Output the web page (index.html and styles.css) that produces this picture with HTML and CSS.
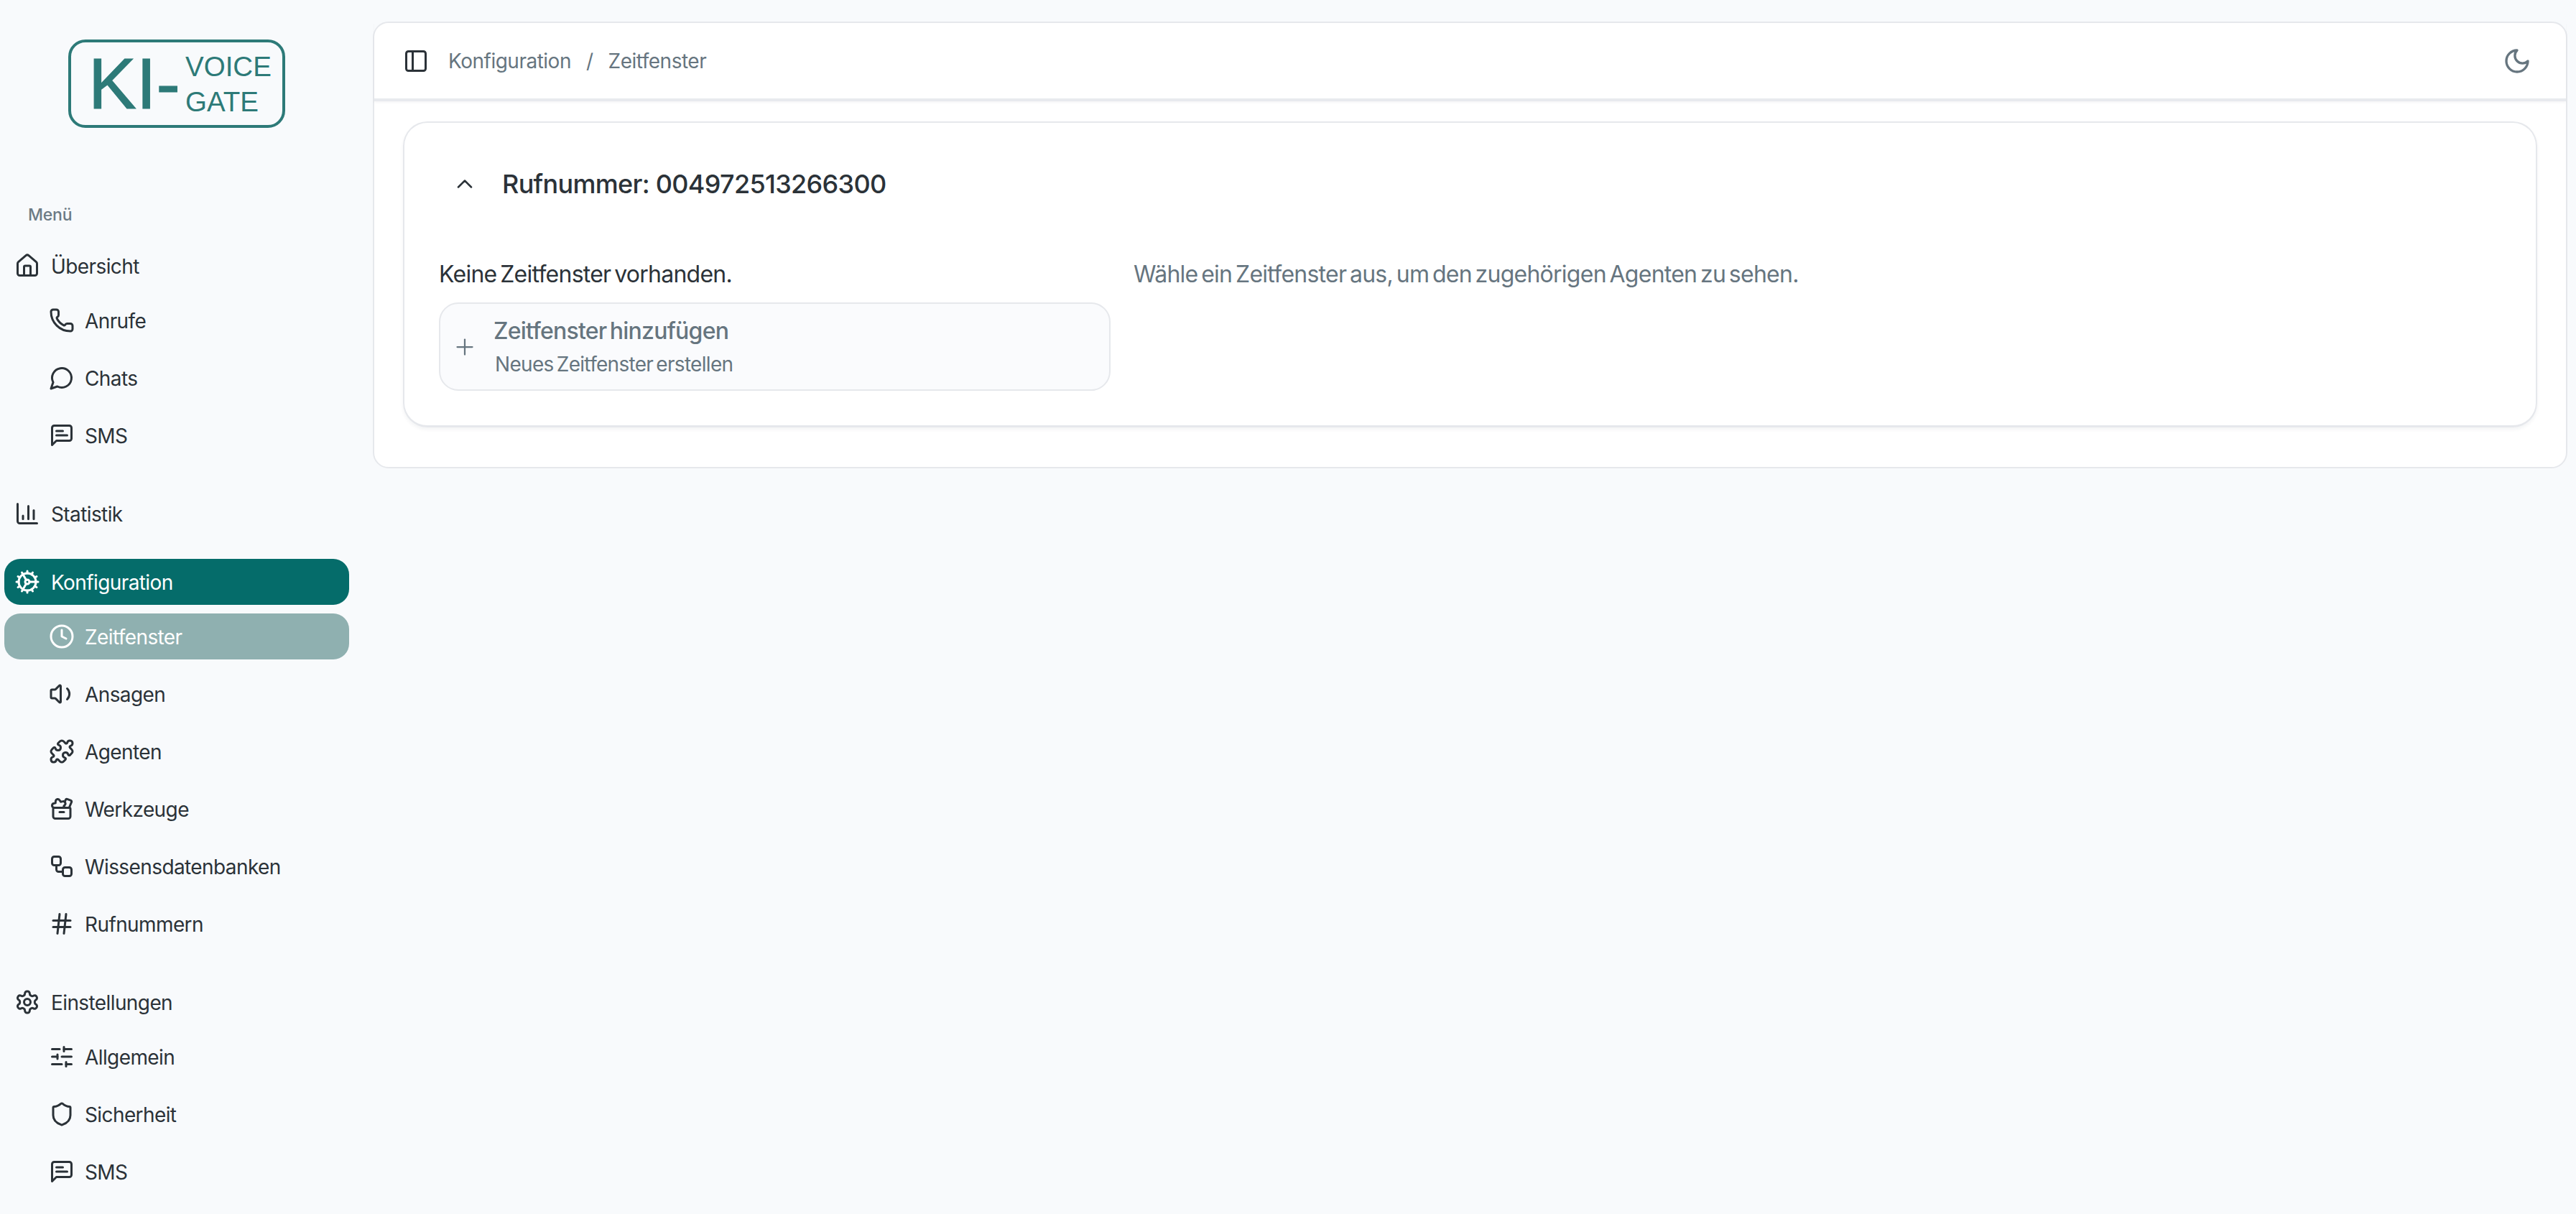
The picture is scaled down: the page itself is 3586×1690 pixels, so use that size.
FILE: index.html
```html
<!DOCTYPE html>
<html lang="de">
<head>
<meta charset="utf-8">
<title>Zeitfenster</title>
<link rel="stylesheet" href="styles.css">
</head>
<body>
<svg class="defs" aria-hidden="true">
  <symbol id="i-house" viewBox="0 0 24 24"><path d="M15 21v-8a1 1 0 0 0-1-1h-4a1 1 0 0 0-1 1v8"/><path d="M3 10a2 2 0 0 1 .709-1.528l7-5.999a2 2 0 0 1 2.582 0l7 5.999A2 2 0 0 1 21 10v9a2 2 0 0 1-2 2H5a2 2 0 0 1-2-2z"/></symbol>
  <symbol id="i-phone" viewBox="0 0 24 24"><path d="M13.832 16.568a1 1 0 0 0 1.213-.303l.355-.465A2 2 0 0 1 17 15h3a2 2 0 0 1 2 2v3a2 2 0 0 1-2 2A18 18 0 0 1 2 4a2 2 0 0 1 2-2h3a2 2 0 0 1 2 2v3a2 2 0 0 1-.8 1.6l-.468.351a1 1 0 0 0-.292 1.233 14 14 0 0 0 6.392 6.384"/></symbol>
  <symbol id="i-chat" viewBox="0 0 24 24"><path d="M7.9 20A9 9 0 1 0 4 16.1L2 22Z"/></symbol>
  <symbol id="i-sms" viewBox="0 0 24 24"><path d="M21 15a2 2 0 0 1-2 2H7l-4 4V5a2 2 0 0 1 2-2h14a2 2 0 0 1 2 2z"/><path d="M13 8H7"/><path d="M17 12H7"/></symbol>
  <symbol id="i-chart" viewBox="0 0 24 24"><path d="M3 3v16a2 2 0 0 0 2 2h16"/><path d="M18 17V9"/><path d="M13 17V5"/><path d="M8 17v-3"/></symbol>
  <symbol id="i-cog" viewBox="0 0 24 24"><path d="M11 10.27 7 3.34"/><path d="m11 13.73-4 6.93"/><path d="M12 22v-2"/><path d="M12 2v2"/><path d="M14 12h8"/><path d="m17 20.66-1-1.73"/><path d="m17 3.34-1 1.73"/><path d="M2 12h2"/><path d="m20.66 17-1.73-1"/><path d="m20.66 7-1.73 1"/><path d="m3.34 17 1.73-1"/><path d="m3.34 7 1.73 1"/><circle cx="12" cy="12" r="2"/><circle cx="12" cy="12" r="8"/></symbol>
  <symbol id="i-clock" viewBox="0 0 24 24"><circle cx="12" cy="12" r="10"/><path d="M12 6v6l4 2"/></symbol>
  <symbol id="i-volume" viewBox="0 0 24 24"><path d="M11 4.702a.705.705 0 0 0-1.203-.498L6.413 7.587A1.4 1.4 0 0 1 5.416 8H3a1 1 0 0 0-1 1v6a1 1 0 0 0 1 1h2.416a1.4 1.4 0 0 1 .997.413l3.383 3.384A.705.705 0 0 0 11 19.298z"/><path d="M17 7a7 7 0 0 1 0 10"/></symbol>
  <symbol id="i-puzzle" viewBox="0 0 24 24"><path d="M15.39 4.39a1 1 0 0 0 1.68-.474 2.5 2.5 0 1 1 3.014 3.015 1 1 0 0 0-.474 1.68l1.683 1.682a2.414 2.414 0 0 1 0 3.414L19.61 15.39a1 1 0 0 1-1.68-.474 2.5 2.5 0 1 0-3.014 3.015 1 1 0 0 1 .474 1.68l-1.683 1.682a2.414 2.414 0 0 1-3.414 0L8.61 19.61a1 1 0 0 0-1.68.474 2.5 2.5 0 1 1-3.014-3.015 1 1 0 0 0 .474-1.68l-1.683-1.682a2.414 2.414 0 0 1 0-3.414L4.39 8.61a1 1 0 0 1 1.68.474 2.5 2.5 0 1 0 3.014-3.015 1 1 0 0 1-.474-1.68l1.683-1.682a2.414 2.414 0 0 1 3.414 0z"/></symbol>
  <symbol id="i-tool" viewBox="0 0 24 24"><path d="M10 15h4"/><path d="m14.817 10.995-.971-1.45 1.034-1.232a2 2 0 0 0-2.025-3.238l-1.82.364L9.91 3.885a2 2 0 0 0-3.625.748L6.141 6.55l-1.725.426a2 2 0 0 0-.19 3.756l.657.27"/><path d="m18.822 10.995 2.26-5.38a1 1 0 0 0-.557-1.318L16.954 2.9a1 1 0 0 0-1.281.533l-.924 2.122"/><path d="M4 12.006A1 1 0 0 1 4.994 11H19a1 1 0 0 1 1 1v7a2 2 0 0 1-2 2H6a2 2 0 0 1-2-2z"/></symbol>
  <symbol id="i-flow" viewBox="0 0 24 24"><rect x="3" y="3" width="8" height="8" rx="2"/><path d="M7 11v4a2 2 0 0 0 2 2h4"/><rect x="13" y="13" width="8" height="8" rx="2"/></symbol>
  <symbol id="i-hash" viewBox="0 0 24 24"><path d="M4 9h16"/><path d="M4 15h16"/><path d="M10 3 8 21"/><path d="M16 3l-2 18"/></symbol>
  <symbol id="i-gear" viewBox="0 0 24 24"><path d="M12.22 2h-.44a2 2 0 0 0-2 2v.18a2 2 0 0 1-1 1.73l-.43.25a2 2 0 0 1-2 0l-.15-.08a2 2 0 0 0-2.73.73l-.22.38a2 2 0 0 0 .73 2.73l.15.1a2 2 0 0 1 1 1.72v.51a2 2 0 0 1-1 1.74l-.15.09a2 2 0 0 0-.73 2.73l.22.38a2 2 0 0 0 2.73.73l.15-.08a2 2 0 0 1 2 0l.43.25a2 2 0 0 1 1 1.73V20a2 2 0 0 0 2 2h.44a2 2 0 0 0 2-2v-.18a2 2 0 0 1 1-1.73l.43-.25a2 2 0 0 1 2 0l.15.08a2 2 0 0 0 2.73-.73l.22-.39a2 2 0 0 0-.73-2.73l-.15-.08a2 2 0 0 1-1-1.74v-.5a2 2 0 0 1 1-1.74l.15-.09a2 2 0 0 0 .73-2.73l-.22-.38a2 2 0 0 0-2.73-.73l-.15.08a2 2 0 0 1-2 0l-.43-.25a2 2 0 0 1-1-1.73V4a2 2 0 0 0-2-2z"/><circle cx="12" cy="12" r="3"/></symbol>
  <symbol id="i-sliders" viewBox="0 0 24 24"><path d="M10 5H3"/><path d="M12 19H3"/><path d="M14 3v4"/><path d="M16 17v4"/><path d="M21 12h-9"/><path d="M21 19h-5"/><path d="M21 5h-7"/><path d="M8 10v4"/><path d="M8 12H3"/></symbol>
  <symbol id="i-shield" viewBox="0 0 24 24"><path d="M20 13c0 5-3.5 7.5-7.66 8.95a1 1 0 0 1-.67-.01C7.5 20.5 4 18 4 13V6a1 1 0 0 1 1-1c2 0 4.5-1.2 6.24-2.72a1.17 1.17 0 0 1 1.52 0C14.51 3.81 17 5 19 5a1 1 0 0 1 1 1z"/></symbol>
  <symbol id="i-panel" viewBox="0 0 24 24"><rect x="3" y="3" width="18" height="18" rx="2"/><path d="M9 3v18"/></symbol>
  <symbol id="i-moon" viewBox="0 0 24 24"><path d="M12 3a6 6 0 0 0 9 9 9 9 0 1 1-9-9Z"/></symbol>
  <symbol id="i-up" viewBox="0 0 24 24"><path d="m18 15-6-6-6 6"/></symbol>
  <symbol id="i-plus" viewBox="0 0 24 24"><path d="M5 12h14"/><path d="M12 5v14"/></symbol>
</svg>

<div class="app">
  <aside class="sidebar">
    <div class="logo-wrap">
      <svg class="logo" viewBox="0 0 302 123">
        <rect class="logo-frame" x="2" y="2" width="298" height="119" rx="22"/>
        <text class="logo-big" x="28" y="96">KI-</text>
        <text class="logo-small" x="163" y="51">VOICE</text>
        <text class="logo-small" x="163" y="100">GATE</text>
      </svg>
    </div>
    <div class="menu-label">Menü</div>
    <nav class="nav">
      <section class="group">
        <a class="item"><svg class="ico"><use href="#i-house"/></svg><span>Übersicht</span></a>
        <div class="sub">
          <a class="item child"><svg class="ico"><use href="#i-phone"/></svg><span>Anrufe</span></a>
          <a class="item child"><svg class="ico"><use href="#i-chat"/></svg><span>Chats</span></a>
          <a class="item child"><svg class="ico"><use href="#i-sms"/></svg><span>SMS</span></a>
        </div>
      </section>
      <section class="group tight">
        <a class="item"><svg class="ico"><use href="#i-chart"/></svg><span>Statistik</span></a>
      </section>
      <section class="group">
        <a class="item active"><svg class="ico"><use href="#i-cog"/></svg><span>Konfiguration</span></a>
        <div class="sub">
          <a class="item child current"><svg class="ico"><use href="#i-clock"/></svg><span>Zeitfenster</span></a>
          <a class="item child"><svg class="ico"><use href="#i-volume"/></svg><span>Ansagen</span></a>
          <a class="item child"><svg class="ico"><use href="#i-puzzle"/></svg><span>Agenten</span></a>
          <a class="item child"><svg class="ico"><use href="#i-tool"/></svg><span>Werkzeuge</span></a>
          <a class="item child"><svg class="ico"><use href="#i-flow"/></svg><span>Wissensdatenbanken</span></a>
          <a class="item child"><svg class="ico"><use href="#i-hash"/></svg><span>Rufnummern</span></a>
        </div>
      </section>
      <section class="group">
        <a class="item"><svg class="ico"><use href="#i-gear"/></svg><span>Einstellungen</span></a>
        <div class="sub">
          <a class="item child"><svg class="ico"><use href="#i-sliders"/></svg><span>Allgemein</span></a>
          <a class="item child"><svg class="ico"><use href="#i-shield"/></svg><span>Sicherheit</span></a>
          <a class="item child"><svg class="ico"><use href="#i-sms"/></svg><span>SMS</span></a>
        </div>
      </section>
    </nav>
  </aside>

  <main class="main">
    <header class="topbar">
      <svg class="ico panel"><use href="#i-panel"/></svg>
      <div class="crumbs"><span>Konfiguration</span><span class="sep">/</span><span>Zeitfenster</span></div>
      <svg class="ico moon"><use href="#i-moon"/></svg>
    </header>
    <div class="content">
      <div class="card">
        <div class="card-head">
          <svg class="ico chev"><use href="#i-up"/></svg>
          <h2>Rufnummer: 004972513266300</h2>
        </div>
        <div class="columns">
          <div class="col-left">
            <p class="empty">Keine Zeitfenster vorhanden.</p>
            <button class="add" type="button">
              <svg class="ico plus"><use href="#i-plus"/></svg>
              <span class="add-text">
                <span class="add-title">Zeitfenster hinzufügen</span>
                <span class="add-sub">Neues Zeitfenster erstellen</span>
              </span>
            </button>
          </div>
          <p class="hint">Wähle ein Zeitfenster aus, um den zugehörigen Agenten zu sehen.</p>
        </div>
      </div>
    </div>
  </main>
</div>
</body>
</html>
```
FILE: styles.css
```css
* { box-sizing: border-box; }
html, body { margin: 0; height: 100%; }
body {
  background: #f8fafc;
  color: #2b3238;
  font-family: "Inter", "Liberation Sans", sans-serif;
  overflow: hidden;
}
.defs { position: absolute; width: 0; height: 0; }
.ico {
  width: 36px;
  height: 36px;
  flex: none;
  fill: none;
  stroke: currentColor;
  stroke-width: 2;
  stroke-linecap: round;
  stroke-linejoin: round;
}
.app { display: flex; align-items: flex-start; height: 1690px; }

/* Sidebar */
.sidebar { width: 519px; flex: none; padding: 55px 0 0 6px; }
.logo-wrap { padding-left: 89px; height: 123px; }
.logo { display: block; width: 302px; height: 123px; }
.logo-frame { fill: none; stroke: #2d7a78; stroke-width: 4; }
.logo-big { font: 400 100px "Liberation Sans", sans-serif; fill: #2d7a78; stroke: #2d7a78; stroke-width: 1.2px; }
.logo-small { font: 400 38.5px "Liberation Sans", sans-serif; fill: #2d7a78; }
.menu-label {
  margin-top: 106px;
  padding-left: 33px;
  height: 30px;
  line-height: 30px;
  font-size: 23px;
  font-weight: 500;
  letter-spacing: -0.2px;
  color: #6b7a85;
}
.nav { width: 480px; margin-top: 24px; }
.group { margin-bottom: 45px; }
.group.tight { margin-bottom: 31px; }
.item {
  display: flex;
  align-items: center;
  gap: 15px;
  height: 64px;
  padding-left: 14px;
  border-radius: 22px;
  font-size: 28px;
  line-height: 38px;
  letter-spacing: -0.6px;
  color: #2b3238;
}
.item span { padding-top: 2px; }
.item.active { background: #056c6a; color: #fff; }
.sub { display: flex; flex-direction: column; gap: 16px; margin-top: 12px; }
.item.child { padding-left: 62px; gap: 14px; }
.item.current { background: #8fb0b0; color: #fff; }

/* Main */
.main {
  width: 3055px;
  margin-top: 30px;
  background: #fff;
  border: 2px solid #e6e8ec;
  border-radius: 22px;
}
.topbar {
  display: flex;
  align-items: center;
  height: 109px;
  padding: 0 48px 0 40px;
  border-bottom: 4px solid #e8eaee;
  box-shadow: 0 2px 3px rgba(20, 30, 50, 0.04);
}
.panel { color: #2b3238; }
.crumbs {
  display: flex;
  gap: 21px;
  margin-left: 27px;
  font-size: 28px;
  letter-spacing: -0.5px;
  color: #66757f;
}
.moon { width: 40px; height: 40px; margin-left: auto; color: #66757f; }
.content { padding: 28px 40px 55px 40px; }
.card {
  height: 426px;
  padding: 0 48px;
  border: 2px solid #e6e8ec;
  border-bottom-width: 3px;
  border-radius: 34px;
  box-shadow: 0 3px 5px rgba(20, 30, 50, 0.05);
}
.card-head { display: flex; align-items: center; gap: 34px; height: 86px; margin-top: 42px; padding-left: 18px; }
.card-head h2 { margin: 0; font-size: 36px; font-weight: 500; letter-spacing: -0.7px; color: #2b3238; }
.chev { color: #2b3238; stroke-width: 1.7; }
.columns { display: flex; gap: 32px; margin-top: 58px; }
.col-left { width: 935px; flex: none; }
.empty, .hint { margin: 0; height: 50px; line-height: 50px; font-size: 32px; letter-spacing: -0.75px; word-spacing: -3.5px; }
.empty { color: #2b3238; }
.hint { color: #66757f; }
.add {
  display: flex;
  align-items: center;
  gap: 22px;
  width: 100%;
  height: 123px;
  margin-top: 14px;
  padding: 0 0 0 16px;
  background: #fafbfd;
  border: 2px solid #e6e8ec;
  border-radius: 27px;
  font-family: inherit;
  text-align: left;
}
.plus { color: #66757f; stroke-width: 1.5; }
.add-text { display: flex; flex-direction: column; gap: 6px; }
.add-title { font-size: 32px; line-height: 42px; letter-spacing: -0.75px; word-spacing: -3.5px; color: #66757f; font-weight: 500; }
.add-sub { font-size: 28px; line-height: 38px; letter-spacing: -0.7px; word-spacing: -3px; color: #66757f; padding-left: 2px; }
```
